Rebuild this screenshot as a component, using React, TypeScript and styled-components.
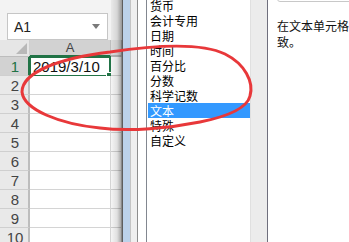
import React from "react";
import styled, { createGlobalStyle } from "styled-components";

const GlobalStyle = createGlobalStyle`
  html, body {
    margin: 0;
    padding: 0;
    background: #ffffff;
  }
`;

const CJK = `"Noto Sans CJK SC", "Noto Sans", sans-serif`;
const UI = `"Liberation Sans", Arial, sans-serif`;

const Page = styled.div`
  position: relative;
  display: flex;
  width: 349px;
  height: 242px;
  overflow: hidden;
  background: #ffffff;
`;

/* ---------- Excel side ---------- */

const ExcelPane = styled.div`
  position: relative;
  display: flex;
  flex-direction: column;
  width: 122px;
  flex-shrink: 0;
  background: #f3f3f3;
`;

const FormulaArea = styled.div`
  height: 52px;
  padding: 13px 0 0 7px;
  box-sizing: border-box;
`;

const NameBox = styled.div`
  display: flex;
  align-items: center;
  justify-content: space-between;
  width: 101px;
  height: 27px;
  box-sizing: border-box;
  padding: 0 7px 0 6px;
  background: #ffffff;
  border: 1px solid #c6c6c6;
  font-family: ${UI};
  font-size: 14px;
  color: #222;
`;

const Caret = styled.span`
  width: 0;
  height: 0;
  border-left: 4px solid transparent;
  border-right: 4px solid transparent;
  border-top: 5px solid #7a7a7a;
`;

const Sheet = styled.div`
  display: grid;
  grid-template-columns: 30px 81px 11px;
  grid-auto-rows: 19px;
  grid-template-rows: 17px;
`;

const Corner = styled.div`
  position: relative;
  background: #e6e6e6;
  border-right: 1px solid #cfcfcf;
  border-bottom: 1px solid #bdbdbd;
  box-sizing: border-box;

  &::after {
    content: "";
    position: absolute;
    right: 2px;
    bottom: 2px;
    border-left: 11px solid transparent;
    border-bottom: 11px solid #b8b8b8;
  }
`;

const ColHeader = styled.div<{ $active?: boolean }>`
  display: flex;
  align-items: center;
  justify-content: center;
  box-sizing: border-box;
  background: ${({ $active }) => ($active ? "#d2d2d2" : "#e6e6e6")};
  border-right: 1px solid #bdbdbd;
  border-bottom: 2px solid ${({ $active }) => ($active ? "#217346" : "#bdbdbd")};
  font-family: ${UI};
  font-size: 13px;
  color: #444;
`;

const RowHeader = styled.div<{ $active?: boolean }>`
  display: flex;
  align-items: center;
  justify-content: center;
  box-sizing: border-box;
  padding-left: 2px;
  background: ${({ $active }) => ($active ? "#d2d2d2" : "#e9e9e9")};
  border-bottom: 1px solid #cfcfcf;
  border-right: 2px solid ${({ $active }) => ($active ? "#217346" : "#bdbdbd")};
  font-family: ${UI};
  font-size: 15px;
  color: ${({ $active }) => ($active ? "#217346" : "#444")};
`;

const Cell = styled.div<{ $selected?: boolean }>`
  position: relative;
  display: flex;
  align-items: center;
  box-sizing: border-box;
  padding-left: 2px;
  background: #ffffff;
  border-right: 1px solid #d4d4d4;
  border-bottom: 1px solid #d4d4d4;
  font-family: ${UI};
  font-size: 15px;
  color: #111;
  ${({ $selected }) =>
    $selected &&
    `
    border: 2px solid #217346;
    margin-left: -1px;
    margin-top: -1px;
    height: 21px;
    &::after {
      content: "";
      position: absolute;
      right: -4px;
      bottom: -4px;
      width: 5px;
      height: 5px;
      background: #217346;
      border: 1px solid #ffffff;
    }
  `}
`;

const EdgeShadow = styled.div`
  position: absolute;
  top: 0;
  right: 0;
  bottom: 0;
  width: 11px;
  background: linear-gradient(
    to right,
    rgba(0, 0, 0, 0.04),
    rgba(0, 0, 0, 0.12) 55%,
    rgba(0, 0, 0, 0.38)
  );
`;

/* ---------- Dialog side ---------- */

const DialogFrame = styled.div`
  display: flex;
  flex-shrink: 0;
  height: 100%;
`;

const OuterEdge = styled.div`
  width: 7px;
  border-left: 1px solid #5e5e5e;
  background: #bcd2ea;
`;

const InnerEdge = styled.div`
  width: 6px;
  border-left: 1px solid #c4c4c4;
  border-right: 1px solid #8d8d8d;
  background: #efefef;
`;

const Gutter = styled.div`
  width: 8px;
  background: #ffffff;
`;

const ListBox = styled.div`
  display: flex;
  width: 120px;
  border-left: 1px solid #828790;
  border-right: 1px solid #6f6f7d;
  background: #ffffff;
`;

const ListItems = styled.div`
  flex: 1;
  margin-top: -2px;
  padding-left: 1px;
  font-family: ${CJK};
  font-size: 12px;
`;

const ListItem = styled.div<{ $selected?: boolean }>`
  height: 15px;
  line-height: 15px;
  padding-left: 2px;
  white-space: nowrap;
  color: ${({ $selected }) => ($selected ? "#ffffff" : "#000000")};
  background: ${({ $selected }) => ($selected ? "#3399ff" : "transparent")};
`;

const ScrollTrack = styled.div`
  width: 17px;
  box-sizing: border-box;
  border-left: 1px solid #e0e0e0;
  background: #ececec;
`;

const SidePanel = styled.div`
  flex: 1;
  min-width: 0;
  padding-left: 9px;
  background: #ffffff;
`;

const SampleBox = styled.div`
  margin-top: -20px;
  height: 22px;
  width: 120px;
  box-sizing: border-box;
  padding: 0 0 0 8px;
  border: 1px solid #c8c8c8;
  border-radius: 3px;
  font-family: ${UI};
  font-size: 14px;
  line-height: 19px;
  color: #111;
`;

const Description = styled.p`
  margin: 16px 0 0;
  width: 436px;
  font-family: ${CJK};
  font-size: 12px;
  line-height: 16px;
  color: #111;
`;

const Annotation = styled.svg`
  position: absolute;
  left: 0;
  top: 0;
  pointer-events: none;
`;

const formats = [
  "货币",
  "会计专用",
  "日期",
  "时间",
  "百分比",
  "分数",
  "科学记数",
  "文本",
  "特殊",
  "自定义",
];

const rows = [1, 2, 3, 4, 5, 6, 7, 8, 9, 10];

export default function App() {
  return (
    <>
      <GlobalStyle />
      <Page>
        <ExcelPane>
          <FormulaArea>
            <NameBox>
              A1
              <Caret />
            </NameBox>
          </FormulaArea>
          <Sheet>
            <Corner />
            <ColHeader $active>A</ColHeader>
            <ColHeader />
            {rows.map((r) => (
              <React.Fragment key={r}>
                <RowHeader $active={r === 1}>{r}</RowHeader>
                <Cell $selected={r === 1}>{r === 1 ? "2019/3/10" : ""}</Cell>
                <Cell />
              </React.Fragment>
            ))}
          </Sheet>
          <EdgeShadow />
        </ExcelPane>

        <DialogFrame>
          <OuterEdge />
          <InnerEdge />
          <Gutter />
          <ListBox>
            <ListItems>
              {formats.map((f) => (
                <ListItem key={f} $selected={f === "文本"}>
                  {f}
                </ListItem>
              ))}
            </ListItems>
            <ScrollTrack />
          </ListBox>
        </DialogFrame>

        <SidePanel>
          <SampleBox>2019/3/10</SampleBox>
          <Description>
            在文本单元格格式中，数字作为文本处理。单元格显示的内容与输入的内容完全一致。
          </Description>
        </SidePanel>

        <Annotation width="349" height="242" viewBox="0 0 349 242">
          <path
            d="M 22 92 C 22 72, 60 58, 110 52 C 150 46, 200 42, 225 54 C 245 64, 254 82, 250 96 C 247 108, 230 116, 200 122 C 170 128, 130 132, 100 128 C 60 124, 24 110, 22 92 Z"
            fill="none"
            stroke="#e8383a"
            strokeWidth="3"
            strokeLinecap="round"
          />
        </Annotation>
      </Page>
    </>
  );
}
